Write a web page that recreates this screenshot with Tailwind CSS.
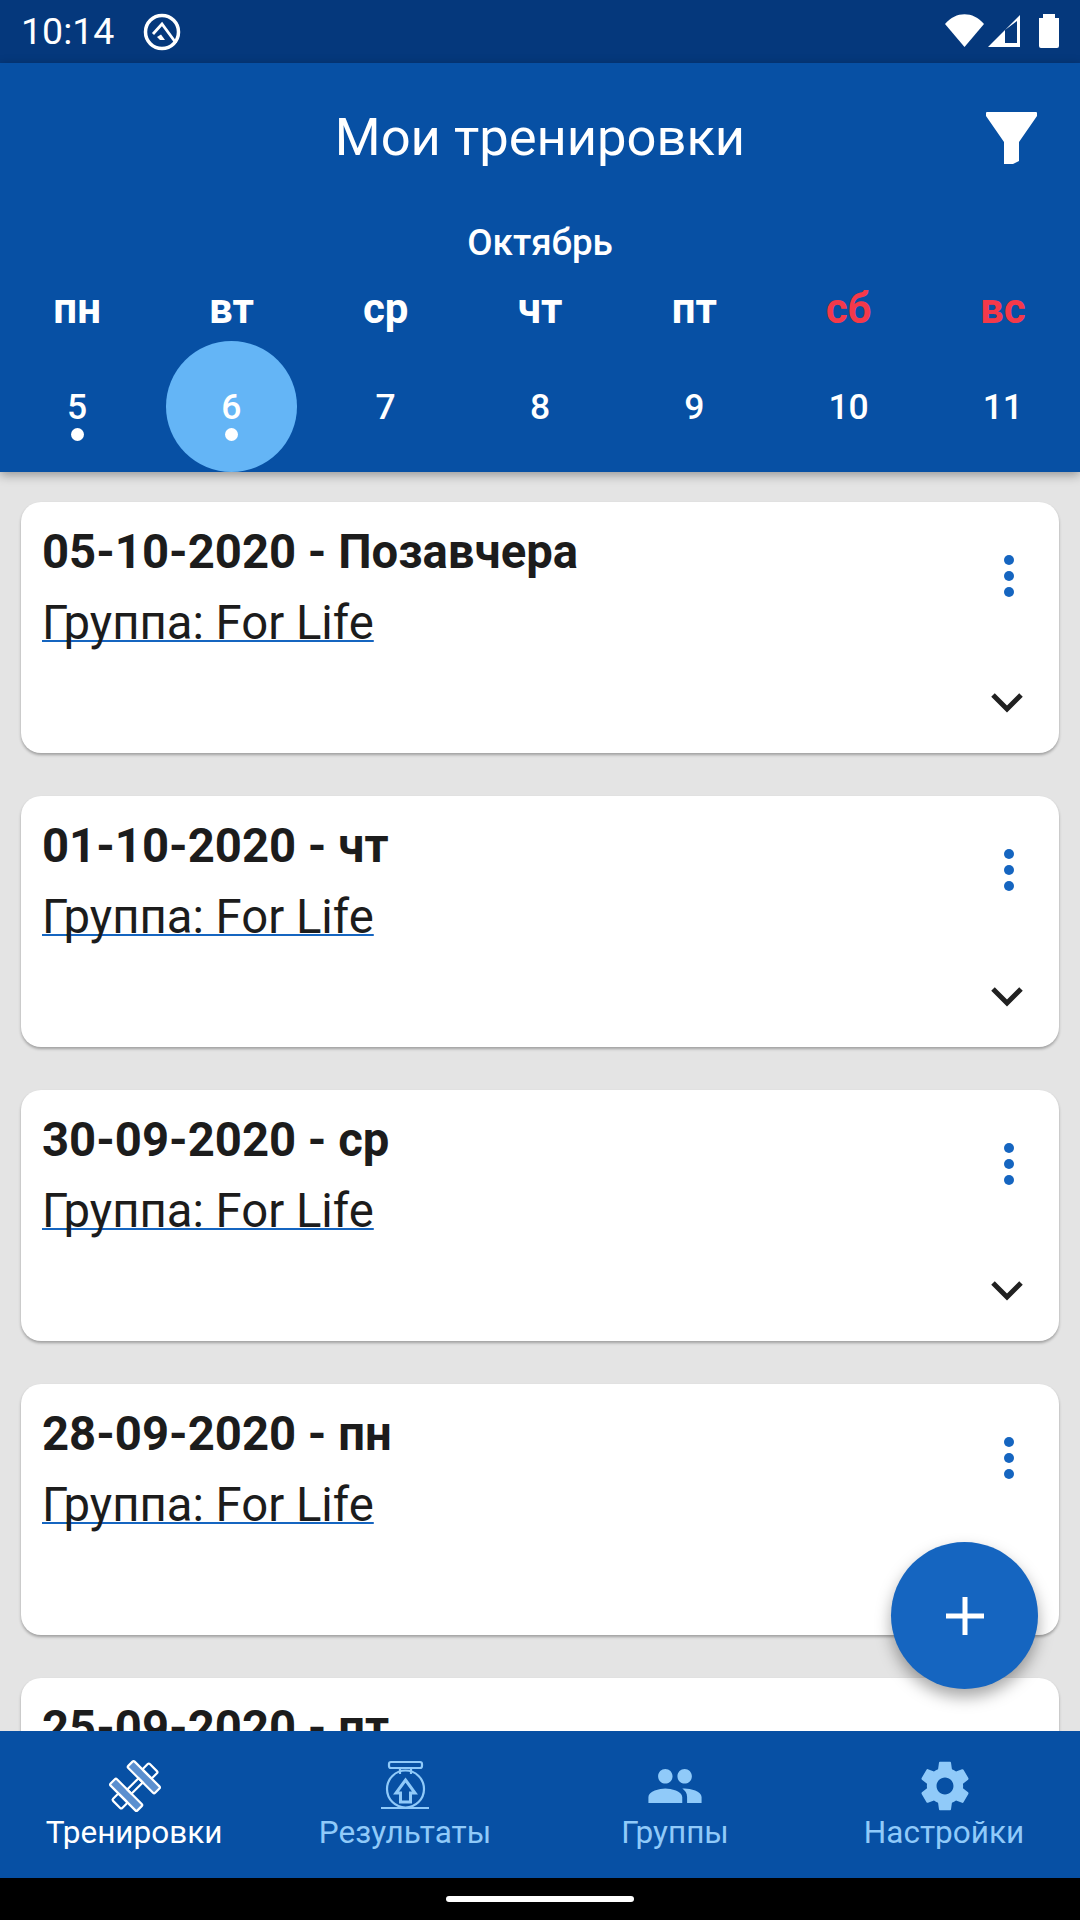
<!DOCTYPE html>
<html lang="ru">
<head>
  <meta charset="UTF-8" />
  <meta name="viewport" content="width=device-width, initial-scale=1.0" />
  <title>Мои тренировки</title>
  <script src="https://cdn.jsdelivr.net/npm/@tailwindcss/browser@4"></script>
</head>
<body class="bg-black font-['Roboto',sans-serif]">
  <div class="relative w-[1080px] h-[1920px] flex flex-col overflow-hidden bg-[#e4e4e4]">

    <!-- status bar -->
    <div class="h-[63px] shrink-0 bg-[#05387c] flex items-center text-white">
      <span class="ml-[21px] text-[37.5px] leading-none">10:14</span>
      <svg class="ml-[28px] w-[40px] h-[40px]" viewBox="0 0 40 40" fill="none">
        <circle cx="20" cy="20" r="16.5" stroke="white" stroke-width="3.5" />
        <path d="M11 22 L20 12 L34 31" stroke="white" stroke-width="2.8" />
        <path d="M15 25 L19 22.5 L23 28 H18 Z" fill="white" />
      </svg>
      <svg class="ml-auto mr-[20px] w-[135px] h-[63px]" viewBox="925 0 135 63" fill="white">
        <path d="M945 24 C956 11 973 11 984 24 L964.5 47 Z" />
        <path fill-rule="evenodd" d="M988 47 L1020 15 V47 Z M1005 30 V43 H1017 V21 Z" />
        <path d="M1043 18 V14 H1055 V18 H1059 V46 Q1059 48 1057 48 H1041 Q1039 48 1039 46 V18 Z" />
      </svg>
    </div>

    <!-- header -->
    <header class="relative z-10 h-[409px] shrink-0 bg-[#0750a4] text-white shadow-[0_3px_10px_rgba(0,0,0,0.35)]">
      <div class="h-[150px] pb-[2px] grid grid-cols-[1fr_auto_1fr] items-center">
        <div></div>
        <h1 class="text-[52.5px] leading-none font-normal">Мои тренировки</h1>
        <svg class="justify-self-end mr-[43px] mt-[2px] w-[51px] h-[52px]" viewBox="0 0 51 52" fill="white">
          <path d="M0 1 Q0 0 1 0 H50 Q51 0 51 1 V4 L33 30 V49 L27 52 H18 V30 L0 4 Z" />
        </svg>
      </div>
      <div class="h-[60px] flex items-center justify-center text-[36.75px] font-medium leading-none">Октябрь</div>
      <div class="h-[68px] pt-[4px] grid grid-cols-7 items-center text-center text-[42px] font-bold leading-none">
        <span>пн</span>
        <span>вт</span>
        <span>ср</span>
        <span>чт</span>
        <span>пт</span>
        <span class="text-[#f4394a]">сб</span>
        <span class="text-[#f4394a]">вс</span>
      </div>
      <div class="grid grid-cols-7 text-[35.5px] font-medium leading-none">
        <div class="relative h-[131px] pt-[3px] flex items-center justify-center">
          5
          <span class="absolute left-1/2 top-[87px] -ml-[6.5px] w-[13px] h-[13px] rounded-full bg-white"></span>
        </div>
        <div class="relative h-[131px] pt-[3px] flex items-center justify-center">
          <span class="absolute left-1/2 top-0 -ml-[65.5px] w-[131px] h-[131px] rounded-full bg-[#64b5f6]"></span>
          <span class="relative">6</span>
          <span class="absolute left-1/2 top-[87px] -ml-[6.5px] w-[13px] h-[13px] rounded-full bg-white"></span>
        </div>
        <div class="h-[131px] pt-[3px] flex items-center justify-center">7</div>
        <div class="h-[131px] pt-[3px] flex items-center justify-center">8</div>
        <div class="h-[131px] pt-[3px] flex items-center justify-center">9</div>
        <div class="h-[131px] pt-[3px] flex items-center justify-center">10</div>
        <div class="h-[131px] pt-[3px] flex items-center justify-center">11</div>
      </div>
    </header>

    <!-- workouts list -->
    <main class="flex-1 min-h-0 overflow-hidden px-[21px] pt-[30px] flex flex-col gap-[43px]">
      <article class="relative h-[251px] shrink-0 bg-white rounded-[20px] shadow-[0_2px_3px_rgba(0,0,0,0.3)] pl-[21px] pt-[25px] text-[#1c1c1c]">
        <h2 class="text-[47.25px] leading-[50px] font-bold">05-10-2020 - Позавчера</h2>
        <p class="mt-[21px] text-[47.25px] leading-[50px] underline decoration-[#1565c0] decoration-2 underline-offset-[1px] [text-decoration-skip-ink:none]">Группа: For Life</p>
        <div class="absolute right-[45px] top-[53px] flex flex-col gap-[6px]">
          <span class="w-[10px] h-[10px] rounded-full bg-[#1565c0]"></span>
          <span class="w-[10px] h-[10px] rounded-full bg-[#1565c0]"></span>
          <span class="w-[10px] h-[10px] rounded-full bg-[#1565c0]"></span>
        </div>
        <svg class="absolute right-[36px] top-[190px] w-[32px] h-[22px]" viewBox="0 0 32 22" fill="none"><path d="M2 3 L16 17 L30 3" stroke="#212121" stroke-width="5" /></svg>
      </article>

      <article class="relative h-[251px] shrink-0 bg-white rounded-[20px] shadow-[0_2px_3px_rgba(0,0,0,0.3)] pl-[21px] pt-[25px] text-[#1c1c1c]">
        <h2 class="text-[47.25px] leading-[50px] font-bold">01-10-2020 - чт</h2>
        <p class="mt-[21px] text-[47.25px] leading-[50px] underline decoration-[#1565c0] decoration-2 underline-offset-[1px] [text-decoration-skip-ink:none]">Группа: For Life</p>
        <div class="absolute right-[45px] top-[53px] flex flex-col gap-[6px]">
          <span class="w-[10px] h-[10px] rounded-full bg-[#1565c0]"></span>
          <span class="w-[10px] h-[10px] rounded-full bg-[#1565c0]"></span>
          <span class="w-[10px] h-[10px] rounded-full bg-[#1565c0]"></span>
        </div>
        <svg class="absolute right-[36px] top-[190px] w-[32px] h-[22px]" viewBox="0 0 32 22" fill="none"><path d="M2 3 L16 17 L30 3" stroke="#212121" stroke-width="5" /></svg>
      </article>

      <article class="relative h-[251px] shrink-0 bg-white rounded-[20px] shadow-[0_2px_3px_rgba(0,0,0,0.3)] pl-[21px] pt-[25px] text-[#1c1c1c]">
        <h2 class="text-[47.25px] leading-[50px] font-bold">30-09-2020 - ср</h2>
        <p class="mt-[21px] text-[47.25px] leading-[50px] underline decoration-[#1565c0] decoration-2 underline-offset-[1px] [text-decoration-skip-ink:none]">Группа: For Life</p>
        <div class="absolute right-[45px] top-[53px] flex flex-col gap-[6px]">
          <span class="w-[10px] h-[10px] rounded-full bg-[#1565c0]"></span>
          <span class="w-[10px] h-[10px] rounded-full bg-[#1565c0]"></span>
          <span class="w-[10px] h-[10px] rounded-full bg-[#1565c0]"></span>
        </div>
        <svg class="absolute right-[36px] top-[190px] w-[32px] h-[22px]" viewBox="0 0 32 22" fill="none"><path d="M2 3 L16 17 L30 3" stroke="#212121" stroke-width="5" /></svg>
      </article>

      <article class="relative h-[251px] shrink-0 bg-white rounded-[20px] shadow-[0_2px_3px_rgba(0,0,0,0.3)] pl-[21px] pt-[25px] text-[#1c1c1c]">
        <h2 class="text-[47.25px] leading-[50px] font-bold">28-09-2020 - пн</h2>
        <p class="mt-[21px] text-[47.25px] leading-[50px] underline decoration-[#1565c0] decoration-2 underline-offset-[1px] [text-decoration-skip-ink:none]">Группа: For Life</p>
        <div class="absolute right-[45px] top-[53px] flex flex-col gap-[6px]">
          <span class="w-[10px] h-[10px] rounded-full bg-[#1565c0]"></span>
          <span class="w-[10px] h-[10px] rounded-full bg-[#1565c0]"></span>
          <span class="w-[10px] h-[10px] rounded-full bg-[#1565c0]"></span>
        </div>
      </article>

      <article class="relative h-[251px] shrink-0 bg-white rounded-[20px] shadow-[0_2px_3px_rgba(0,0,0,0.3)] pl-[21px] pt-[25px] text-[#1c1c1c]">
        <h2 class="text-[47.25px] leading-[50px] font-bold">25-09-2020 - пт</h2>
        <div class="absolute right-[45px] top-[53px] flex flex-col gap-[6px]">
          <span class="w-[10px] h-[10px] rounded-full bg-[#1565c0]"></span>
        </div>
      </article>
    </main>

    <!-- add button -->
    <button class="absolute left-[891px] top-[1542px] w-[147px] h-[147px] rounded-full bg-[#1565c0] shadow-[0_8px_16px_rgba(0,0,0,0.35)] flex items-center justify-center">
      <svg class="w-[38px] h-[38px]" viewBox="0 0 38 38" fill="white"><path d="M16.5 0 H21.5 V16.5 H38 V21.5 H21.5 V38 H16.5 V21.5 H0 V16.5 H16.5 Z" /></svg>
    </button>

    <!-- bottom nav -->
    <nav class="relative z-10 h-[147px] shrink-0 bg-[#0750a4] grid grid-cols-4 text-[31.5px] leading-none text-[#90caf9]">
      <div class="flex flex-col items-center pt-[26px] text-white">
        <svg class="w-[58px] h-[58px]" viewBox="0 0 58 58" fill="none" stroke="white" stroke-width="2.2">
          <g transform="rotate(-45 29 29)">
            <rect x="12" y="10" width="9" height="38" rx="1.5" fill="#5b8fcf" />
            <rect x="37" y="10" width="9" height="38" rx="1.5" fill="#5b8fcf" />
            <rect x="3" y="22.5" width="9" height="13" rx="1.5" />
            <rect x="46" y="22.5" width="9" height="13" rx="1.5" />
            <rect x="21" y="26" width="16" height="6" />
          </g>
        </svg>
        <span class="mt-[2px] -ml-[2px]">Тренировки</span>
      </div>
      <div class="flex flex-col items-center pt-[26px]">
        <svg class="w-[70px] h-[58px]" viewBox="0 0 70 58" fill="none" stroke="#90caf9" stroke-width="2.2">
          <rect x="19" y="5" width="33" height="6" rx="2" />
          <path d="M30 11 V17 M41 11 V17" />
          <circle cx="35.5" cy="32" r="18.5" />
          <path d="M11 51 H59" />
          <path d="M35.5 23 L45 36 H40.5 V45 H30.5 V36 H26 Z" stroke-width="3" />
        </svg>
        <span class="mt-[2px]">Результаты</span>
      </div>
      <div class="flex flex-col items-center pt-[26px]">
        <svg class="w-[58px] h-[58px]" viewBox="0 0 24 24" fill="#90caf9"><path d="M16 11c1.66 0 2.99-1.34 2.99-3S17.66 5 16 5c-1.66 0-3 1.34-3 3s1.34 3 3 3zm-8 0c1.66 0 2.99-1.34 2.99-3S9.66 5 8 5C6.34 5 5 6.34 5 8s1.34 3 3 3zm0 2c-2.33 0-7 1.17-7 3.5V19h14v-2.5c0-2.33-4.67-3.5-7-3.5zm8 0c-.29 0-.62.02-.97.05 1.16.84 1.97 1.97 1.97 3.45V19h6v-2.5c0-2.33-4.67-3.5-7-3.5z" /></svg>
        <span class="mt-[2px]">Группы</span>
      </div>
      <div class="flex flex-col items-center pt-[26px]">
        <svg class="w-[58px] h-[58px]" viewBox="0 0 24 24" fill="#90caf9"><path d="M19.43 12.98c.04-.32.07-.64.07-.98s-.03-.66-.07-.98l2.11-1.65c.19-.15.24-.42.12-.64l-2-3.46c-.12-.22-.39-.3-.61-.22l-2.49 1c-.52-.4-1.08-.73-1.69-.98l-.38-2.65C14.46 2.18 14.25 2 14 2h-4c-.25 0-.46.18-.49.42l-.38 2.65c-.61.25-1.17.59-1.69.98l-2.49-1c-.23-.09-.49 0-.61.22l-2 3.46c-.13.22-.07.49.12.64l2.11 1.65c-.04.32-.07.65-.07.98s.03.66.07.98l-2.11 1.65c-.19.15-.24.42-.12.64l2 3.46c.12.22.39.3.61.22l2.49-1c.52.4 1.08.73 1.69.98l.38 2.65c.03.24.24.42.49.42h4c.25 0 .46-.18.49-.42l.38-2.65c.61-.25 1.17-.59 1.69-.98l2.49 1c.23.09.49 0 .61-.22l2-3.46c.12-.22.07-.49-.12-.64l-2.11-1.65zM12 15.5c-1.93 0-3.5-1.57-3.5-3.5s1.57-3.5 3.5-3.5 3.5 1.57 3.5 3.5-1.57 3.5-3.5 3.5z" /></svg>
        <span class="mt-[2px] -ml-[2px]">Настройки</span>
      </div>
    </nav>

    <!-- system nav -->
    <div class="relative z-10 h-[42px] shrink-0 bg-black flex items-center justify-center">
      <span class="w-[188px] h-[6px] rounded-full bg-white"></span>
    </div>
  </div>
</body>
</html>
